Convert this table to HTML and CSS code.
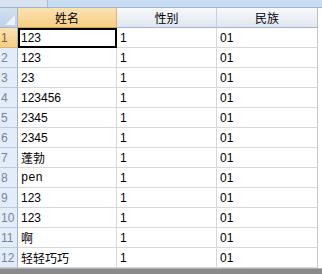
FILE: index.html
```html
<!DOCTYPE html>
<html>
<head>
    <title>Sheet1</title>
    <link rel="stylesheet" href="styles.css">
</head>
<body>
    <div class="topbar">
        <div class="tab-left"></div>
        <div class="tab-rest"></div>
    </div>
    <div class="sheet">
        <div class="corner"><span class="tri"></span></div>
        <div class="colhead active">姓名</div>
        <div class="colhead">性别</div>
        <div class="colhead last">民族</div>
        <div class="filler"></div>

        <div class="rowhead active">1</div>
        <div class="cell selected">123</div>
        <div class="cell">1</div>
        <div class="cell last">01</div>
        <div class="filler"></div>

        <div class="rowhead">2</div>
        <div class="cell">123</div>
        <div class="cell">1</div>
        <div class="cell last">01</div>
        <div class="filler"></div>

        <div class="rowhead">3</div>
        <div class="cell">23</div>
        <div class="cell">1</div>
        <div class="cell last">01</div>
        <div class="filler"></div>

        <div class="rowhead">4</div>
        <div class="cell">123456</div>
        <div class="cell">1</div>
        <div class="cell last">01</div>
        <div class="filler"></div>

        <div class="rowhead">5</div>
        <div class="cell">2345</div>
        <div class="cell">1</div>
        <div class="cell last">01</div>
        <div class="filler"></div>

        <div class="rowhead">6</div>
        <div class="cell">2345</div>
        <div class="cell">1</div>
        <div class="cell last">01</div>
        <div class="filler"></div>

        <div class="rowhead">7</div>
        <div class="cell">蓬勃</div>
        <div class="cell">1</div>
        <div class="cell last">01</div>
        <div class="filler"></div>

        <div class="rowhead">8</div>
        <div class="cell mono">pen</div>
        <div class="cell">1</div>
        <div class="cell last">01</div>
        <div class="filler"></div>

        <div class="rowhead">9</div>
        <div class="cell">123</div>
        <div class="cell">1</div>
        <div class="cell last">01</div>
        <div class="filler"></div>

        <div class="rowhead">10</div>
        <div class="cell">123</div>
        <div class="cell">1</div>
        <div class="cell last">01</div>
        <div class="filler"></div>

        <div class="rowhead">11</div>
        <div class="cell">啊</div>
        <div class="cell">1</div>
        <div class="cell last">01</div>
        <div class="filler"></div>

        <div class="rowhead">12</div>
        <div class="cell">轻轻巧巧</div>
        <div class="cell">1</div>
        <div class="cell last">01</div>
        <div class="filler"></div>
    </div>
    <div class="statusbar"></div>
</body>
</html>
```

FILE: styles.css
```css
body {
    margin: 0;
    overflow: hidden;
    background: #fff;
    font-family: "Liberation Sans", "Noto Sans CJK SC", sans-serif;
    font-size: 12px;
    color: #000;
}

.topbar {
    display: flex;
    height: 7px;
    border-bottom: 1px solid #9fb5cf;
}

.tab-left {
    width: 47px;
    background: #d9e3ef;
    border-right: 1px solid #a8bdd6;
}

.tab-rest {
    flex: 1;
    background: #c8dcf4;
}

.sheet {
    display: grid;
    grid-template-columns: 18px 99px 100px 101px 1fr;
    grid-auto-rows: 20px;
}

.corner {
    position: relative;
    background: linear-gradient(#d3e0ef, #c0d2e8);
    border-right: 1px solid #9fb5cf;
    border-bottom: 1px solid #9fb5cf;
    box-sizing: border-box;
}

.corner .tri {
    position: absolute;
    right: 2px;
    bottom: 2px;
    width: 0;
    height: 0;
    border-left: 10px solid transparent;
    border-bottom: 10px solid #eef3fa;
}

.colhead {
    display: flex;
    align-items: center;
    justify-content: center;
    font-size: 12px;
    background: linear-gradient(#f7f9fc, #e1e7f0);
    border-right: 1px solid #c5d1e0;
    border-bottom: 1px solid #9fb5cf;
    box-sizing: border-box;
}

.colhead.active {
    background: linear-gradient(#fbe2b3, #f6cd84);
    border-right-color: #e0b46a;
    border-bottom-color: #d6a24f;
}

.colhead.last {
    border-right-color: #b8c2cc;
}

.filler {
    background: #fff;
}

.rowhead {
    display: flex;
    align-items: center;
    padding-left: 1px;
    color: #6f86a6;
    font-size: 12px;
    background: #e4ecf7;
    border-right: 1px solid #9fb5cf;
    border-bottom: 1px solid #b9cbe2;
    box-sizing: border-box;
}

.rowhead.active {
    background: linear-gradient(#fbe2b3, #f6cd84);
    color: #7a6440;
    border-bottom-color: #e0b46a;
}

.cell {
    display: flex;
    align-items: center;
    padding-left: 3px;
    border-right: 1px solid #d5d9de;
    border-bottom: 1px solid #d5d9de;
    box-sizing: border-box;
    white-space: nowrap;
}

.cell.last {
    border-right-color: #c4c8cc;
}

.cell.mono {
    font-family: "Liberation Mono", monospace;
}

.cell.selected {
    border: 2px solid #000;
    padding-left: 1px;
}

.statusbar {
    height: 10px;
    background: #8a8a8a;
    border-top: 1px solid #b0b0b0;
}
```
